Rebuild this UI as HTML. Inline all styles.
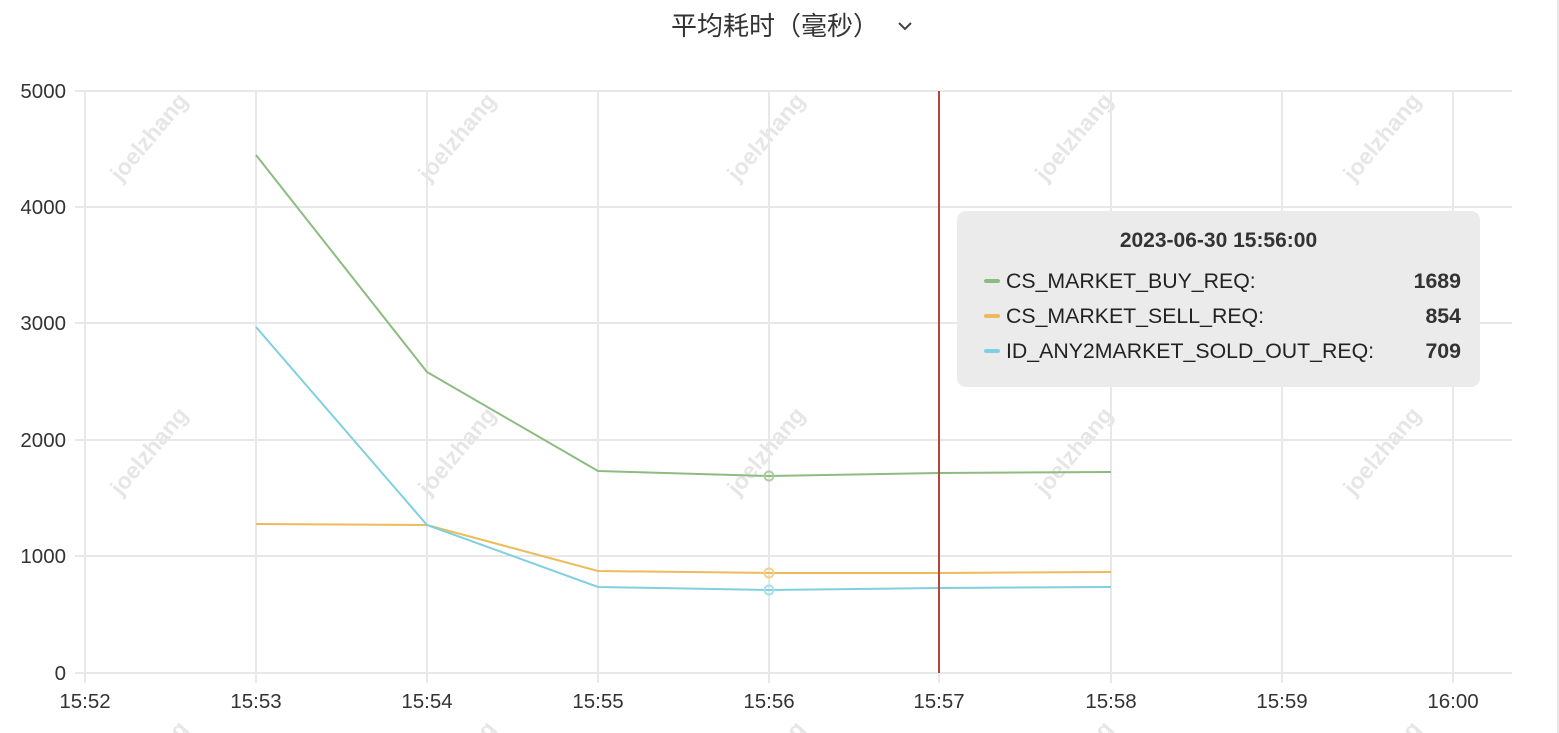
<!DOCTYPE html>
<html><head><meta charset="utf-8"><style>
html,body{margin:0;width:1559px;height:733px;overflow:hidden;background:#fff;font-family:"Liberation Sans","Noto Sans CJK SC",sans-serif;}
.tt{position:absolute;left:957px;top:211px;width:523px;height:176px;background:#ebebeb;border-radius:9px;color:#222;}
.row{position:absolute;left:20px;width:484px;font-size:21.3px;height:24px;line-height:24px;}
.row i{position:absolute;left:7px;top:10px;width:16px;height:4px;border-radius:2px;}
.row span{position:absolute;left:29px;}
.row b{position:absolute;right:0;font-weight:bold;color:#333;}
</style></head><body>
<svg width="1559" height="733" style="position:absolute;left:0;top:0" font-family="Liberation Sans, sans-serif">
<g fill="#e6e6e6" font-weight="bold" font-size="23" text-anchor="middle">
<text transform="translate(155,142) rotate(-50)">joelzhang</text>
<text transform="translate(463,142) rotate(-50)">joelzhang</text>
<text transform="translate(772,142) rotate(-50)">joelzhang</text>
<text transform="translate(1080,142) rotate(-50)">joelzhang</text>
<text transform="translate(1388,142) rotate(-50)">joelzhang</text>
<text transform="translate(155,456) rotate(-50)">joelzhang</text>
<text transform="translate(463,456) rotate(-50)">joelzhang</text>
<text transform="translate(772,456) rotate(-50)">joelzhang</text>
<text transform="translate(1080,456) rotate(-50)">joelzhang</text>
<text transform="translate(1388,456) rotate(-50)">joelzhang</text>
<text transform="translate(155,770) rotate(-50)">joelzhang</text>
<text transform="translate(463,770) rotate(-50)">joelzhang</text>
<text transform="translate(772,770) rotate(-50)">joelzhang</text>
<text transform="translate(1080,770) rotate(-50)">joelzhang</text>
<text transform="translate(1388,770) rotate(-50)">joelzhang</text>
</g>
<g stroke="#e8e8e8" stroke-width="2">
<line x1="75" y1="91" x2="1512" y2="91"/><line x1="75" y1="207" x2="1512" y2="207"/><line x1="75" y1="323" x2="1512" y2="323"/><line x1="75" y1="440" x2="1512" y2="440"/><line x1="75" y1="556" x2="1512" y2="556"/><line x1="75" y1="673" x2="1512" y2="673"/>
<line x1="85" y1="91" x2="85" y2="683"/><line x1="256" y1="91" x2="256" y2="683"/><line x1="427" y1="91" x2="427" y2="683"/><line x1="598" y1="91" x2="598" y2="683"/><line x1="769" y1="91" x2="769" y2="683"/><line x1="939" y1="91" x2="939" y2="683"/><line x1="1111" y1="91" x2="1111" y2="683"/><line x1="1282" y1="91" x2="1282" y2="683"/><line x1="1453" y1="91" x2="1453" y2="683"/>
<line x1="1558" y1="0" x2="1558" y2="733"/>
</g>
<g fill="none" stroke-width="2">
<polyline stroke="#8cbc80" points="256,155 427,372 598,471 769,476 939,473 1111,472"/>
<polyline stroke="#ecbc5a" points="256,524 427,525 598,571 769,573 939,573 1111,572"/>
<polyline stroke="#80d0e0" points="256,327 427,525 598,587 769,590 939,588 1111,587"/>
<circle cx="769" cy="476" r="4.5" stroke="#a8d09c"/><circle cx="769" cy="573" r="4.5" stroke="#f2d288"/><circle cx="769" cy="590" r="4.5" stroke="#a8e0ea"/>
</g>
<line x1="939" y1="91" x2="939" y2="673" stroke="#b5443c" stroke-width="2"/>
<g fill="#333" font-size="20.5" text-anchor="end">
<text x="66" y="98">5000</text><text x="66" y="214">4000</text><text x="66" y="330">3000</text><text x="66" y="447">2000</text><text x="66" y="563">1000</text><text x="66" y="680">0</text>
</g>
<g fill="#333" font-size="20.5" text-anchor="middle">
<text x="85" y="708">15:52</text><text x="256" y="708">15:53</text><text x="427" y="708">15:54</text><text x="598" y="708">15:55</text><text x="769" y="708">15:56</text><text x="939" y="708">15:57</text><text x="1111" y="708">15:58</text><text x="1282" y="708">15:59</text><text x="1453" y="708">16:00</text>
</g>
<text x="775" y="35" text-anchor="middle" font-size="26" fill="#333" font-family="Liberation Sans, Noto Sans CJK SC, sans-serif">平均耗时（毫秒）</text>
<polyline points="899,23 905,29 911,23" fill="none" stroke="#444" stroke-width="2"/>
</svg>
<div class="tt">
<div style="position:absolute;left:0;right:0;top:18px;text-align:center;font-size:21px;font-weight:bold;color:#333;">2023-06-30 15:56:00</div>
<div class="row" style="top:58px"><i style="background:#8cbc80"></i><span>CS_MARKET_BUY_REQ:</span><b>1689</b></div>
<div class="row" style="top:93px"><i style="background:#ecbc5a"></i><span>CS_MARKET_SELL_REQ:</span><b>854</b></div>
<div class="row" style="top:128px"><i style="background:#80d0e0"></i><span>ID_ANY2MARKET_SOLD_OUT_REQ:</span><b>709</b></div>
</div>
</body></html>
